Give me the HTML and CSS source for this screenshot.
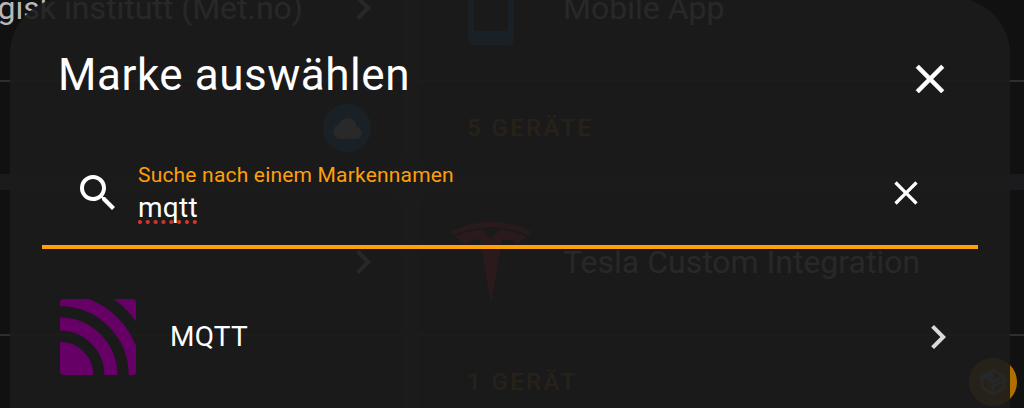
FILE: index.html
```html
<!DOCTYPE html>
<html lang="de">
<head>
<meta charset="utf-8">
<title>Marke auswählen</title>
<link rel="stylesheet" href="styles.css">
</head>
<body>
<main class="integrations">
  <section class="card">
    <div class="card-header card-header-end">
      <span class="card-name">Meteorologisk institutt (Met.no)</span>
      <svg class="chevron" viewBox="0 0 24 24"><path d="M8.59 16.58 13.17 12 8.59 7.41 10 6l6 6-6 6z"/></svg>
    </div>
    <div class="card-footer">
      <span></span>
      <span class="badge badge-cloud"><svg viewBox="0 0 24 24"><path d="M6.5 20Q4.22 20 2.61 18.43 1 16.85 1 14.58 1 12.63 2.17 11.1 3.35 9.57 5.25 9.15 5.88 6.85 7.75 5.43 9.63 4 12 4 14.93 4 16.96 6.04 19 8.07 19 11 20.73 11.2 21.86 12.5 23 13.78 23 15.5 23 17.38 21.69 18.69 20.38 20 18.5 20Z"/></svg></span>
    </div>
  </section>
  <section class="card">
    <div class="card-header">
      <svg class="brand" viewBox="0 0 80 80"><path fill="#036a9f" fill-rule="evenodd" d="M23 2h34a6 6 0 0 1 6 6v63a6 6 0 0 1-6 6H23a6 6 0 0 1-6-6V8a6 6 0 0 1 6-6zM23 14v49h34V14z"/></svg>
      <span class="card-name">Mobile App</span>
    </div>
    <div class="card-footer"><span class="devices">5 Geräte</span></div>
  </section>
  <section class="card">
    <div class="card-header card-header-end">
      <svg class="chevron" viewBox="0 0 24 24"><path d="M8.59 16.58 13.17 12 8.59 7.41 10 6l6 6-6 6z"/></svg>
    </div>
    <div class="card-footer"></div>
  </section>
  <section class="card">
    <div class="card-header">
      <svg class="brand" viewBox="0 0 240 240"><path fill="#d01020" d="M0 28Q120-28 240 28L234 38Q120-8 7 38ZM12 44Q55 25 95 23L120 53 145 23Q185 25 229 44L197 66Q188 52 153 52L121 239H119L87 52Q55 52 43 66Z"/></svg>
      <span class="card-name">Tesla Custom Integration</span>
    </div>
    <div class="card-footer">
      <span class="devices">1 Gerät</span>
      <span class="badge badge-custom"><svg viewBox="0 0 24 24"><path d="M2,10.96C1.5,10.68 1.35,10.07 1.63,9.59L3.13,7C3.24,6.8 3.41,6.66 3.6,6.58L11.43,2.18C11.59,2.06 11.79,2 12,2C12.21,2 12.41,2.06 12.57,2.18L20.47,6.62C20.66,6.72 20.82,6.88 20.91,7.08L22.36,9.6C22.64,10.08 22.47,10.69 22,10.96L21,11.54V16.5C21,16.88 20.79,17.21 20.47,17.38L12.57,21.82C12.41,21.94 12.21,22 12,22C11.79,22 11.59,21.94 11.43,21.82L3.53,17.38C3.21,17.21 3,16.88 3,16.5V10.96C2.7,11.13 2.32,11.14 2,10.96M12,4.15V4.15L12,10.85V10.85L17.96,7.5L12,4.15M5,15.91L11,19.29V12.58L5,9.21V15.91M19,15.91V12.69L14,15.59C13.67,15.77 13.3,15.76 13,15.6V19.29L19,15.91M13.85,13.36L20.13,9.73L19.55,8.72L13.27,12.35L13.85,13.36Z"/></svg></span>
    </div>
  </section>
</main>

<div class="dialog" role="dialog">
  <header class="dialog-header">
    <h1 class="dialog-title">Marke auswählen</h1>
    <svg class="icon icon-close" viewBox="0 0 24 24"><path d="M19 6.41 17.59 5 12 10.59 6.41 5 5 6.41 10.59 12 5 17.59 6.41 19 12 13.41 17.59 19 19 17.59 13.41 12z"/></svg>
  </header>
  <div class="search">
    <svg class="icon" viewBox="0 0 24 24"><path d="M9.5,3A6.5,6.5 0 0,1 16,9.5C16,11.11 15.41,12.59 14.44,13.73L14.71,14H15.5L20.5,19L19,20.5L14,15.5V14.71L13.73,14.44C12.59,15.41 11.11,16 9.5,16A6.5,6.5 0 0,1 3,9.5A6.5,6.5 0 0,1 9.5,3M9.5,5C7,5 5,7 5,9.5C5,12 7,14 9.5,14C12,14 14,12 14,9.5C14,7 12,5 9.5,5Z"/></svg>
    <div class="field">
      <span class="field-label">Suche nach einem Markennamen</span>
      <span class="field-value">mqtt</span>
    </div>
    <svg class="icon-clear" viewBox="0 0 24 24"><path d="M19 6.41 17.59 5 12 10.59 6.41 5 5 6.41 10.59 12 5 17.59 6.41 19 12 13.41 17.59 19 19 17.59 13.41 12z"/></svg>
  </div>
  <div class="result">
    <svg class="result-logo" viewBox="0 0 229 229">
      <defs><clipPath id="tile"><rect width="229" height="229" rx="10"/></clipPath></defs>
      <g clip-path="url(#tile)" fill="none" stroke="#606">
        <circle cx="0" cy="229" r="100.500" fill="#606" stroke="none"/>
        <circle cx="0" cy="229" r="153.500" stroke-width="39"/>
        <circle cx="0" cy="229" r="226" stroke-width="38"/>
        <circle cx="0" cy="229" r="310" stroke-width="60"/>
      </g>
    </svg>
    <span class="result-name">MQTT</span>
    <svg class="icon icon-next" viewBox="0 0 24 24"><path d="M8.59 16.58 13.17 12 8.59 7.41 10 6l6 6-6 6z"/></svg>
  </div>
</div>
</body>
</html>
```
FILE: styles.css
```css
* { box-sizing: border-box; }

body {
  margin: 0;
  height: 408px;
  overflow: hidden;
  position: relative;
  background: #1b1b1d;
  color: #fff;
  font-family: Roboto, "Noto Sans", sans-serif;
}

svg { display: block; flex: none; fill: currentColor; }

.integrations {
  display: grid;
  grid-template-columns: 630px 630px;
  grid-auto-rows: 238px;
  gap: 16px;
  width: 1276px;
  margin: -64px 0 0 -227px;
}

.card {
  display: flex;
  flex-direction: column;
  background: #111;
  border-radius: 24px;
  color: #b8b8b8;
}

.card-header {
  display: flex;
  align-items: center;
  gap: 32px;
  height: 144px;
  padding: 0 16px 0 32px;
}

.card-header-end { justify-content: flex-end; gap: 36px; }
.card-name { font-size: 32px; white-space: nowrap; }
.chevron { width: 48px; height: 48px; }
.brand { width: 80px; height: 80px; }

.card-footer {
  display: flex;
  align-items: center;
  justify-content: space-between;
  flex: 1;
  padding: 0 32px 0 48px;
  border-top: 2px solid #2e2e2e;
}

.devices {
  color: #b07000;
  font-size: 24px;
  font-weight: 500;
  letter-spacing: 2.4px;
  text-transform: uppercase;
}

.badge {
  display: grid;
  place-items: center;
  width: 48px;
  height: 48px;
  border-radius: 50%;
}

.badge svg { width: 32px; height: 32px; }
.badge-cloud { background: #036a9f; color: #c8c8c8; }
.badge-cloud svg { width: 31px; height: 31px; }
.badge-custom { background: #b07000; color: #a8b4c0; }

.dialog {
  position: absolute;
  top: -2px;
  left: 10px;
  width: 1000px;
  height: 410px;
  padding: 0 32px;
  border-radius: 56px 56px 0 0;
  background: rgba(27, 27, 27, 0.92);
}

.dialog-header {
  display: flex;
  align-items: center;
  justify-content: space-between;
  height: 138px;
  padding: 24px 24px 0 16px;
}

.dialog-title { margin: -8px 0 0; font-size: 44px; font-weight: 400; letter-spacing: 0.55px; }
.icon { width: 48px; height: 48px; }
.icon-close { stroke: #fff; stroke-width: 0.3; stroke-linejoin: round; }

.search {
  display: flex;
  align-items: center;
  height: 113px;
  padding: 4px 52px 0 32px;
  border-bottom: 4px solid #ff9f0a;
}

.field { display: flex; flex-direction: column; flex: 1; align-items: flex-start; padding-left: 16px; }
.field-label { color: #ff9f0a; font-size: 21px; line-height: 26px; letter-spacing: 0.19px; }

.field-value {
  padding-top: 4px;
  font-size: 28px;
  line-height: 32px;
  letter-spacing: 0.25px;
  background: radial-gradient(circle at center, #d0342c 1.7px, transparent 2.3px) -2px 100% / 7.85px 4px repeat-x;
}

.icon-clear { width: 40px; height: 40px; }

.result {
  display: flex;
  align-items: center;
  height: 157px;
  padding: 19px 16px 0 18px;
}

.result { height: 176px; padding-top: 0; }
.result-logo { width: 76px; height: 76px; }
.result-name { flex: 1; margin-top: -2px; padding-left: 34px; font-size: 28px; letter-spacing: 0.3px; }
.icon-next { color: #dadada; }
```
